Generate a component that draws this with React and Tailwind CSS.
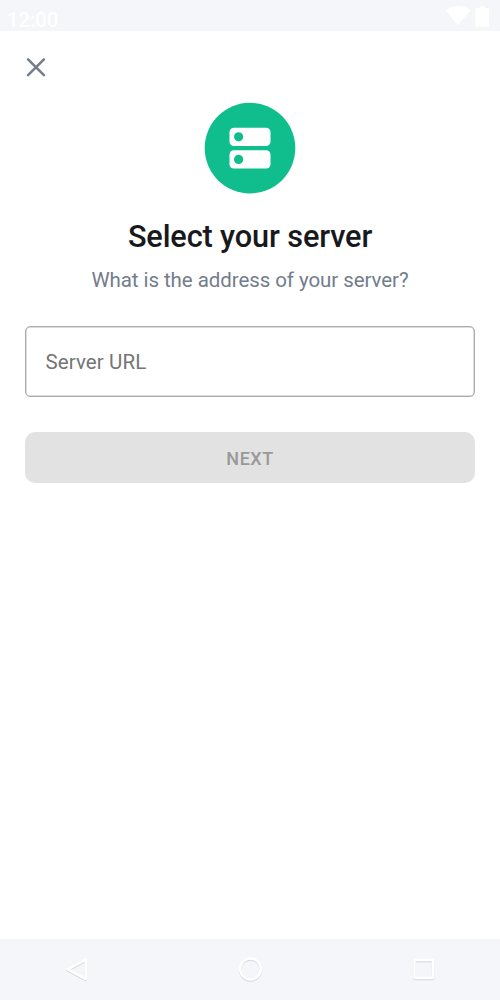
function StatusBar() {
  return (
    <header className="flex h-[31px] shrink-0 items-start justify-between bg-[#f4f6fa] pl-[7px] pr-[10px] text-white">
      <span className="pt-[7px] text-[20.5px] leading-[26px] font-medium tracking-[-0.150px]">12:00</span>
      <div className="flex items-start gap-[4px] pt-[5px]">
        <svg width="26" height="21" viewBox="0 0 26 21" fill="currentColor">
          <path d="M0.5 5.2C4 2.4 8.2 0.9 13 0.9s9 1.5 12.500 4.300L13 20.300z" />
        </svg>
        <svg width="15" height="22" viewBox="0 0 15 22" fill="currentColor">
          <path d="M4.500 1.200h5.500v2h3a1 1 0 0 1 1 1v16.500a1 1 0 0 1-1 1H1.500a1 1 0 0 1-1-1V4.200a1 1 0 0 1 1-1h3z" />
        </svg>
      </div>
    </header>
  );
}

function ServerIcon() {
  return (
    <svg width="92" height="92" viewBox="0 0 92 92">
      <circle cx="46" cy="46.100" r="45.300" fill="#0fbe8c" />
      <g fill="#fff">
        <rect x="25.500" y="25.700" width="41" height="18.200" rx="4.300" />
        <rect x="25.500" y="48.300" width="41" height="18.200" rx="4.300" />
      </g>
      <g fill="#0fbe8c">
        <circle cx="34.600" cy="34.800" r="4.600" />
        <circle cx="34.600" cy="57.400" r="4.600" />
      </g>
    </svg>
  );
}

function NavigationBar() {
  return (
    <nav className="flex h-[61px] shrink-0 items-start justify-between bg-[#f4f6fa] pt-[17px] pl-[63px] pr-[62px]">
      <svg className="drop-shadow-[0_1px_0.700px_rgba(0,0,0,0.13)]" width="27" height="28" viewBox="0 0 27 28" fill="none" stroke="#fff" strokeWidth="2.500" strokeLinejoin="round">
        <path d="M22.700 3.600V23L4.700 13.300z" />
      </svg>
      <svg className="drop-shadow-[0_1px_0.700px_rgba(0,0,0,0.13)]" width="27" height="28" viewBox="0 0 27 28" fill="none" stroke="#fff" strokeWidth="2.500">
        <circle cx="13.500" cy="13" r="10.400" />
      </svg>
      <svg className="drop-shadow-[0_1px_0.700px_rgba(0,0,0,0.13)]" width="27" height="28" viewBox="0 0 27 28" fill="none" stroke="#fff" strokeWidth="2.500" strokeLinejoin="round">
        <rect x="3.500" y="4" width="18.500" height="18" />
      </svg>
    </nav>
  );
}

export default function App() {
  return (
    <div className="flex h-[1000px] w-[500px] flex-col bg-white font-['Roboto',sans-serif]">
      <StatusBar />
      <main className="flex flex-1 flex-col px-[25px]">
        <button className="mt-[25px] h-[22px] w-[22px]" aria-label="Close">
          <svg width="22" height="22" viewBox="0 0 22 22" fill="none" stroke="#737d8c" strokeWidth="2.500" strokeLinecap="round">
            <path d="M3.100 3.300l15.800 15.800M18.900 3.300L3.100 19.100" />
          </svg>
        </button>
        <div className="mt-[24px] flex justify-center">
          <ServerIcon />
        </div>
        <h1 className="mt-[23px] text-center text-[30.700px] leading-[40px] font-medium tracking-[-0.130px] text-[#17191c]">
          Select your server
        </h1>
        <p className="mt-[9px] text-center text-[20.500px] leading-[28px] tracking-[-0.070px] text-[#737d8c]">
          What is the address of your server?
        </p>
        <input
          className="mt-[32px] h-[71px] w-full rounded-[5px] border border-[#adadad] px-[19.500px] text-[20.500px] tracking-[0.100px] text-[#17191c] shadow-[inset_0_0_0_0.500px_#b8b8b8] outline-none placeholder:text-[#757575]"
          placeholder="Server URL"
        />
        <button className="mt-[35px] h-[51px] w-full rounded-[10px] bg-[#e2e2e2] pt-[2px] text-[18px] font-medium tracking-[0.500px] text-[#999]">
          NEXT
        </button>
      </main>
      <NavigationBar />
    </div>
  );
}
